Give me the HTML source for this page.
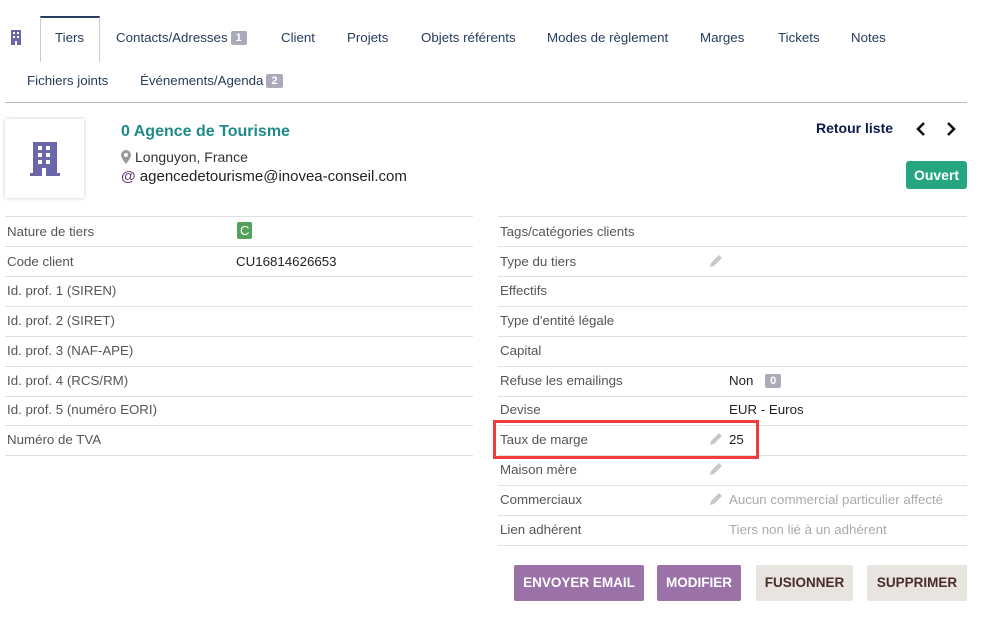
<!DOCTYPE html>
<html><head><meta charset="utf-8"><style>
body{margin:0;width:984px;height:619px;background:#fff;font-family:"Liberation Sans",sans-serif;font-size:13.3px;color:#333;position:relative;overflow:hidden}
.a{position:absolute;white-space:nowrap}
.tab{position:absolute;color:#263c5c;font-size:13.3px}
.badge{display:inline-block;background:#aaaabb;color:#fff;font-size:11px;font-weight:bold;padding:1px 5px;border-radius:2px;margin-left:3px;vertical-align:1px}
.ln{position:absolute;height:1px;background:#e0e0e0}
.lbl{position:absolute;color:#555;font-size:13.3px}
.val{position:absolute;color:#222;font-size:13.3px}
.btn{position:absolute;top:565px;height:36px;line-height:36px;text-align:center;font-weight:bold;font-size:13.5px;border-radius:2px}
.pen{position:absolute;width:14px;height:14px}
</style></head><body>
<svg class="a" style="left:10px;top:30px" width="12" height="15" viewBox="0 0 12 15"><rect x="1" y="0" width="10" height="15" fill="#6a67a8"/><g fill="#fff"><rect x="3" y="2" width="2" height="2"/><rect x="7" y="2" width="2" height="2"/><rect x="3" y="6" width="2" height="2"/><rect x="7" y="6" width="2" height="2"/><rect x="5" y="11" width="2" height="4"/></g></svg>
<div class="a" style="left:40px;top:16px;width:58px;height:44px;border:1px solid #ccc;border-top:2px solid #263c5c;border-bottom:none;background:#fff"></div>
<div class="tab" style="left:55px;top:30px">Tiers</div>
<div class="tab" style="left:116px;top:30px">Contacts/Adresses<span class="badge">1</span></div>
<div class="tab" style="left:281px;top:30px">Client</div>
<div class="tab" style="left:347px;top:30px">Projets</div>
<div class="tab" style="left:421px;top:30px">Objets référents</div>
<div class="tab" style="left:547px;top:30px">Modes de règlement</div>
<div class="tab" style="left:700px;top:30px">Marges</div>
<div class="tab" style="left:778px;top:30px">Tickets</div>
<div class="tab" style="left:851px;top:30px">Notes</div>
<div class="tab" style="left:27px;top:73px">Fichiers joints</div>
<div class="tab" style="left:140px;top:73px">Événements/Agenda<span class="badge">2</span></div>
<div class="a" style="left:5px;top:102px;width:962px;height:1px;background:#bbb"></div>
<div class="a" style="left:5px;top:119px;width:79px;height:79px;background:#fff;box-shadow:0 0 4px rgba(0,0,0,.2)"></div>
<svg class="a" style="left:30px;top:142px" width="30" height="34" viewBox="0 0 30 34"><rect x="3" y="0" width="24" height="34" fill="#6a67a8"/><rect x="0" y="31" width="30" height="3" fill="#6a67a8"/><g fill="#fff"><rect x="8" y="4" width="4" height="4"/><rect x="16" y="4" width="4" height="4"/><rect x="8" y="11" width="4" height="4"/><rect x="16" y="11" width="4" height="4"/><rect x="8" y="18" width="4" height="4"/><rect x="16" y="18" width="4" height="4"/><rect x="12" y="26" width="4" height="8"/></g></svg>
<div class="a" style="left:121px;top:123px;color:#1f8a8a;font-size:16px;font-weight:bold">0 Agence de Tourisme</div>
<svg class="a" style="left:121px;top:150px" width="10" height="14" viewBox="0 0 10 14"><path d="M5 0 A5 5 0 0 1 10 5 C10 8 5 14 5 14 C5 14 0 8 0 5 A5 5 0 0 1 5 0 Z" fill="#999"/><circle cx="5" cy="5" r="2" fill="#fff"/></svg>
<div class="a" style="left:135px;top:149px;color:#333;font-size:14px">Longuyon, France</div>
<div class="a" style="left:121px;top:168px;color:#222;font-size:15px"><b style="color:#6a4a7a">@</b> agencedetourisme@inovea-conseil.com</div>
<div class="a" style="left:816px;top:120px;color:#0c1a4a;font-weight:bold;font-size:14px">Retour liste</div>
<svg class="a" style="left:916px;top:122px" width="10" height="14" viewBox="0 0 10 14"><path d="M8 1 L2 7 L8 13" stroke="#111" stroke-width="2.6" fill="none"/></svg>
<svg class="a" style="left:946px;top:122px" width="10" height="14" viewBox="0 0 10 14"><path d="M2 1 L8 7 L2 13" stroke="#111" stroke-width="2.6" fill="none"/></svg>
<div class="a" style="left:906px;top:161px;width:61px;height:28px;line-height:28px;background:#25a580;color:#fff;font-weight:bold;text-align:center;border-radius:3px;font-size:14px">Ouvert</div>

<div class="ln" style="left:5px;top:216px;width:468px"></div>
<div class="ln" style="left:5px;top:246px;width:468px"></div>
<div class="ln" style="left:5px;top:276px;width:468px"></div>
<div class="ln" style="left:5px;top:306px;width:468px"></div>
<div class="ln" style="left:5px;top:336px;width:468px"></div>
<div class="ln" style="left:5px;top:366px;width:468px"></div>
<div class="ln" style="left:5px;top:396px;width:468px"></div>
<div class="ln" style="left:5px;top:425px;width:468px"></div>
<div class="ln" style="left:5px;top:455px;width:468px"></div>
<div class="lbl" style="left:7px;top:224px">Nature de tiers</div>
<div class="a" style="left:237px;top:222px;background:#55a05a;color:#fff;font-size:13px;padding:1px 3px;border-radius:2px">C</div>
<div class="lbl" style="left:7px;top:254px">Code client</div>
<div class="val" style="left:236px;top:254px">CU16814626653</div>
<div class="lbl" style="left:7px;top:283px">Id. prof. 1 (SIREN)</div>
<div class="lbl" style="left:7px;top:313px">Id. prof. 2 (SIRET)</div>
<div class="lbl" style="left:7px;top:343px">Id. prof. 3 (NAF-APE)</div>
<div class="lbl" style="left:7px;top:373px">Id. prof. 4 (RCS/RM)</div>
<div class="lbl" style="left:7px;top:402px">Id. prof. 5 (numéro EORI)</div>
<div class="lbl" style="left:7px;top:432px">Numéro de TVA</div>

<div class="ln" style="left:498px;top:216px;width:469px"></div>
<div class="ln" style="left:498px;top:246px;width:469px"></div>
<div class="ln" style="left:498px;top:276px;width:469px"></div>
<div class="ln" style="left:498px;top:306px;width:469px"></div>
<div class="ln" style="left:498px;top:336px;width:469px"></div>
<div class="ln" style="left:498px;top:366px;width:469px"></div>
<div class="ln" style="left:498px;top:396px;width:469px"></div>
<div class="ln" style="left:498px;top:425px;width:469px"></div>
<div class="ln" style="left:498px;top:455px;width:469px"></div>
<div class="ln" style="left:498px;top:485px;width:469px"></div>
<div class="ln" style="left:498px;top:515px;width:469px"></div>
<div class="ln" style="left:498px;top:545px;width:469px"></div>
<div class="lbl" style="left:500px;top:224px">Tags/catégories clients</div>
<div class="lbl" style="left:500px;top:254px">Type du tiers</div>
<div class="lbl" style="left:500px;top:283px">Effectifs</div>
<div class="lbl" style="left:500px;top:313px">Type d'entité légale</div>
<div class="lbl" style="left:500px;top:343px">Capital</div>
<div class="lbl" style="left:500px;top:373px">Refuse les emailings</div>
<div class="val" style="left:729px;top:373px">Non <span class="badge" style="margin-left:8px">0</span></div>
<div class="lbl" style="left:500px;top:402px">Devise</div>
<div class="val" style="left:729px;top:402px">EUR - Euros</div>
<div class="lbl" style="left:500px;top:432px">Taux de marge</div>
<div class="val" style="left:729px;top:432px">25</div>
<div class="lbl" style="left:500px;top:462px">Maison mère</div>
<div class="lbl" style="left:500px;top:492px">Commerciaux</div>
<div class="a" style="left:729px;top:492px;color:#aaa">Aucun commercial particulier affecté</div>
<div class="lbl" style="left:500px;top:522px">Lien adhérent</div>
<div class="a" style="left:729px;top:522px;color:#aaa">Tiers non lié à un adhérent</div>
<svg class="pen" style="left:709px;top:254px" viewBox="0 0 14 14"><path d="M1 13 L2 9 L10 1 L13 4 L5 12 Z" fill="#c8c8c8"/></svg>
<svg class="pen" style="left:709px;top:432px" viewBox="0 0 14 14"><path d="M1 13 L2 9 L10 1 L13 4 L5 12 Z" fill="#c8c8c8"/></svg>
<svg class="pen" style="left:709px;top:462px" viewBox="0 0 14 14"><path d="M1 13 L2 9 L10 1 L13 4 L5 12 Z" fill="#c8c8c8"/></svg>
<svg class="pen" style="left:709px;top:492px" viewBox="0 0 14 14"><path d="M1 13 L2 9 L10 1 L13 4 L5 12 Z" fill="#c8c8c8"/></svg>
<div class="a" style="left:493px;top:420px;width:260px;height:33px;border:3px solid #f03c3c"></div>

<div class="btn" style="left:514px;width:130px;background:#9a72a8;color:#fff">ENVOYER EMAIL</div>
<div class="btn" style="left:657px;width:84px;background:#9a72a8;color:#fff">MODIFIER</div>
<div class="btn" style="left:756px;width:97px;background:#e8e4e0;color:#4a2a2a">FUSIONNER</div>
<div class="btn" style="left:867px;width:100px;background:#e8e4e0;color:#4a2a2a">SUPPRIMER</div>
</body></html>
